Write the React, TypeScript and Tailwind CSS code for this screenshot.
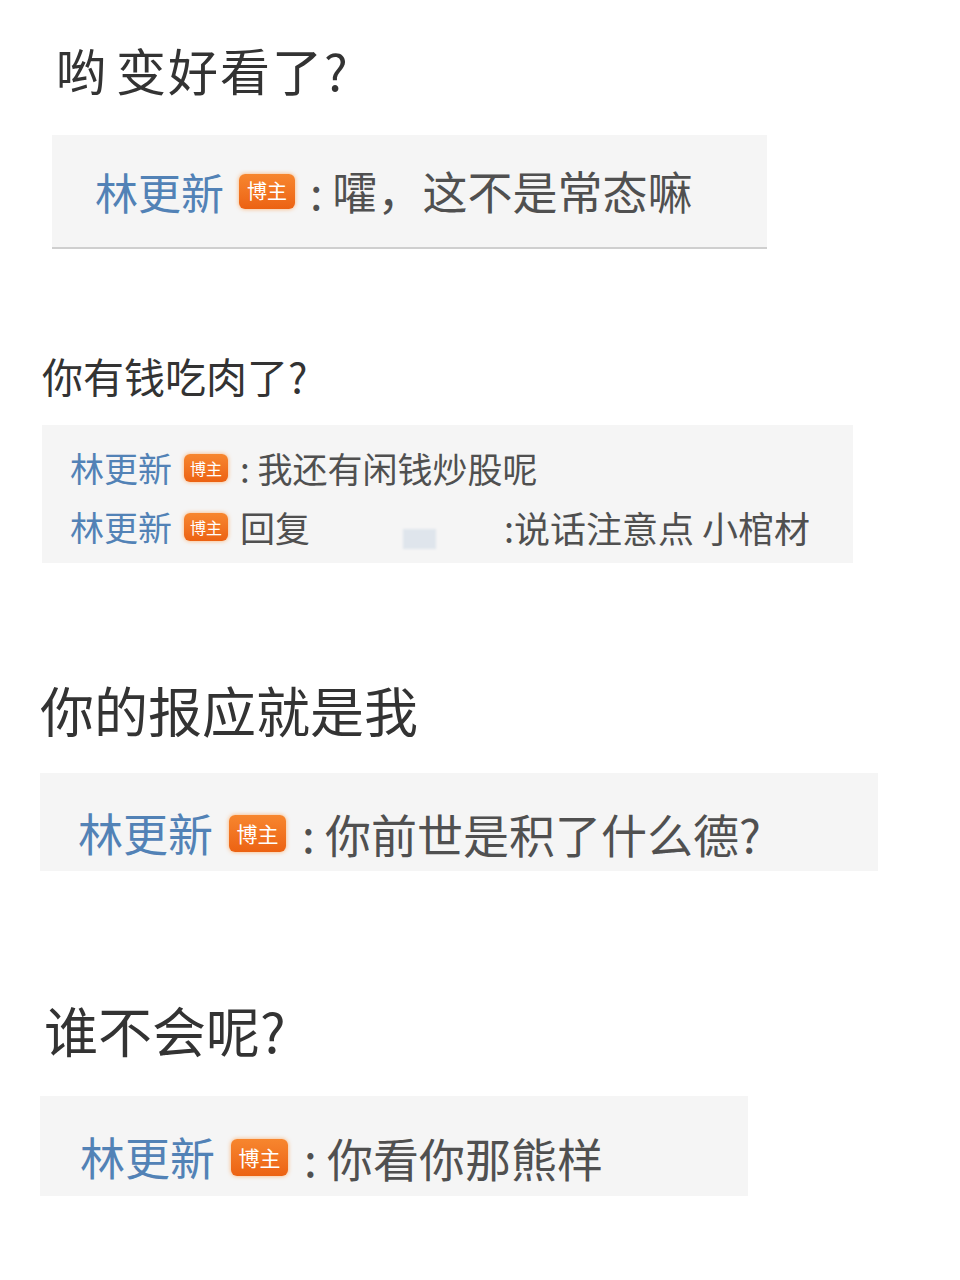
import type { ReactNode } from 'react';

const font = "font-['Noto_Sans_CJK_SC','Noto_Sans',sans-serif]";

function Badge({ className }: { className: string }) {
  return (
    <span
      className={`inline-flex items-center justify-center rounded-[6px] bg-gradient-to-b from-[#f7862e] to-[#ec6212] text-white shadow-[0_0_4px_rgba(255,150,60,0.7)] leading-none ${className}`}
    >
      博主
    </span>
  );
}

function Line({
  size,
  badge,
  gap,
  text,
  children,
}: {
  size: string;
  badge: string;
  gap: string;
  text: string;
  children: ReactNode;
}) {
  return (
    <div className={`flex items-center whitespace-nowrap ${size}`}>
      <span className="text-[#5282b6]">林更新</span>
      <Badge className={`${gap} ${badge}`} />
      <span className={`text-[#505050] ${text}`}>{children}</span>
    </div>
  );
}

export default function App() {
  return (
    <div className={`min-h-[1280px] w-[960px] bg-white pb-10 ${font}`}>
      {/* 1 */}
      <div className="pt-[40px] pl-[56px] text-[50px] leading-[58px] tracking-[2px] text-[#333]">
        哟<span className="ml-[8px]">变好看了?</span>
      </div>
      <div className="mt-[37px] ml-[52px] flex h-[114px] w-[715px] items-center border-b-2 border-[#cfcfcf] bg-[#f5f5f5] pl-[43px]">
        <Line
          size="text-[43px] leading-[50px]"
          gap="mx-[15px]"
          badge="h-[35px] w-[56px] text-[20px]"
          text="text-[45px]"
        >
          : 嚯，这不是常态嘛
        </Line>
      </div>

      {/* 2 */}
      <div className="mt-[101px] pl-[42px] text-[41px] leading-[50px] text-[#333]">你有钱吃肉了?</div>
      <div className="mt-[25px] ml-[42px] flex h-[138px] w-[811px] flex-col gap-[9px] bg-[#f5f5f5] pt-[18px] pl-[28px]">
        <Line
          size="h-[50px] text-[34px] leading-[50px]"
          gap="mx-[12px]"
          badge="h-[28px] w-[44px] text-[16px]"
          text="text-[35px]"
        >
          : 我还有闲钱炒股呢
        </Line>
        <div className="flex h-[50px] items-center whitespace-nowrap text-[34px] leading-[50px]">
          <span className="text-[#5282b6]">林更新</span>
          <Badge className="mx-[12px] h-[28px] w-[44px] text-[16px]" />
          <span className="text-[35px] text-[#505050]">回复</span>
          <span className="ml-[93px] mt-[24px] h-[20px] w-[33px] bg-[#dfe5ec] blur-[1px]" />
          <span className="ml-[68px] text-[36px] text-[#505050]">:说话注意点 小棺材</span>
        </div>
      </div>

      {/* 3 */}
      <div className="mt-[117px] pl-[40px] text-[54px] leading-[60px] text-[#333]">你的报应就是我</div>
      <div className="mt-[33px] ml-[40px] flex h-[98px] w-[838px] items-center bg-[#f5f5f5] pt-[22px] pl-[38px]">
        <Line
          size="text-[45px] leading-[52px]"
          gap="mx-[16px]"
          badge="h-[37px] w-[57px] text-[21px]"
          text="text-[46px]"
        >
          : 你前世是积了什么德?
        </Line>
      </div>

      {/* 4 */}
      <div className="mt-[129px] pl-[44px] text-[54px] leading-[60px] text-[#333]">谁不会呢?</div>
      <div className="mt-[36px] ml-[40px] flex h-[100px] w-[708px] items-center bg-[#f5f5f5] pt-[22px] pl-[40px]">
        <Line
          size="text-[45px] leading-[52px]"
          gap="mx-[16px]"
          badge="h-[37px] w-[57px] text-[21px]"
          text="text-[46px]"
        >
          : 你看你那熊样
        </Line>
      </div>
    </div>
  );
}
